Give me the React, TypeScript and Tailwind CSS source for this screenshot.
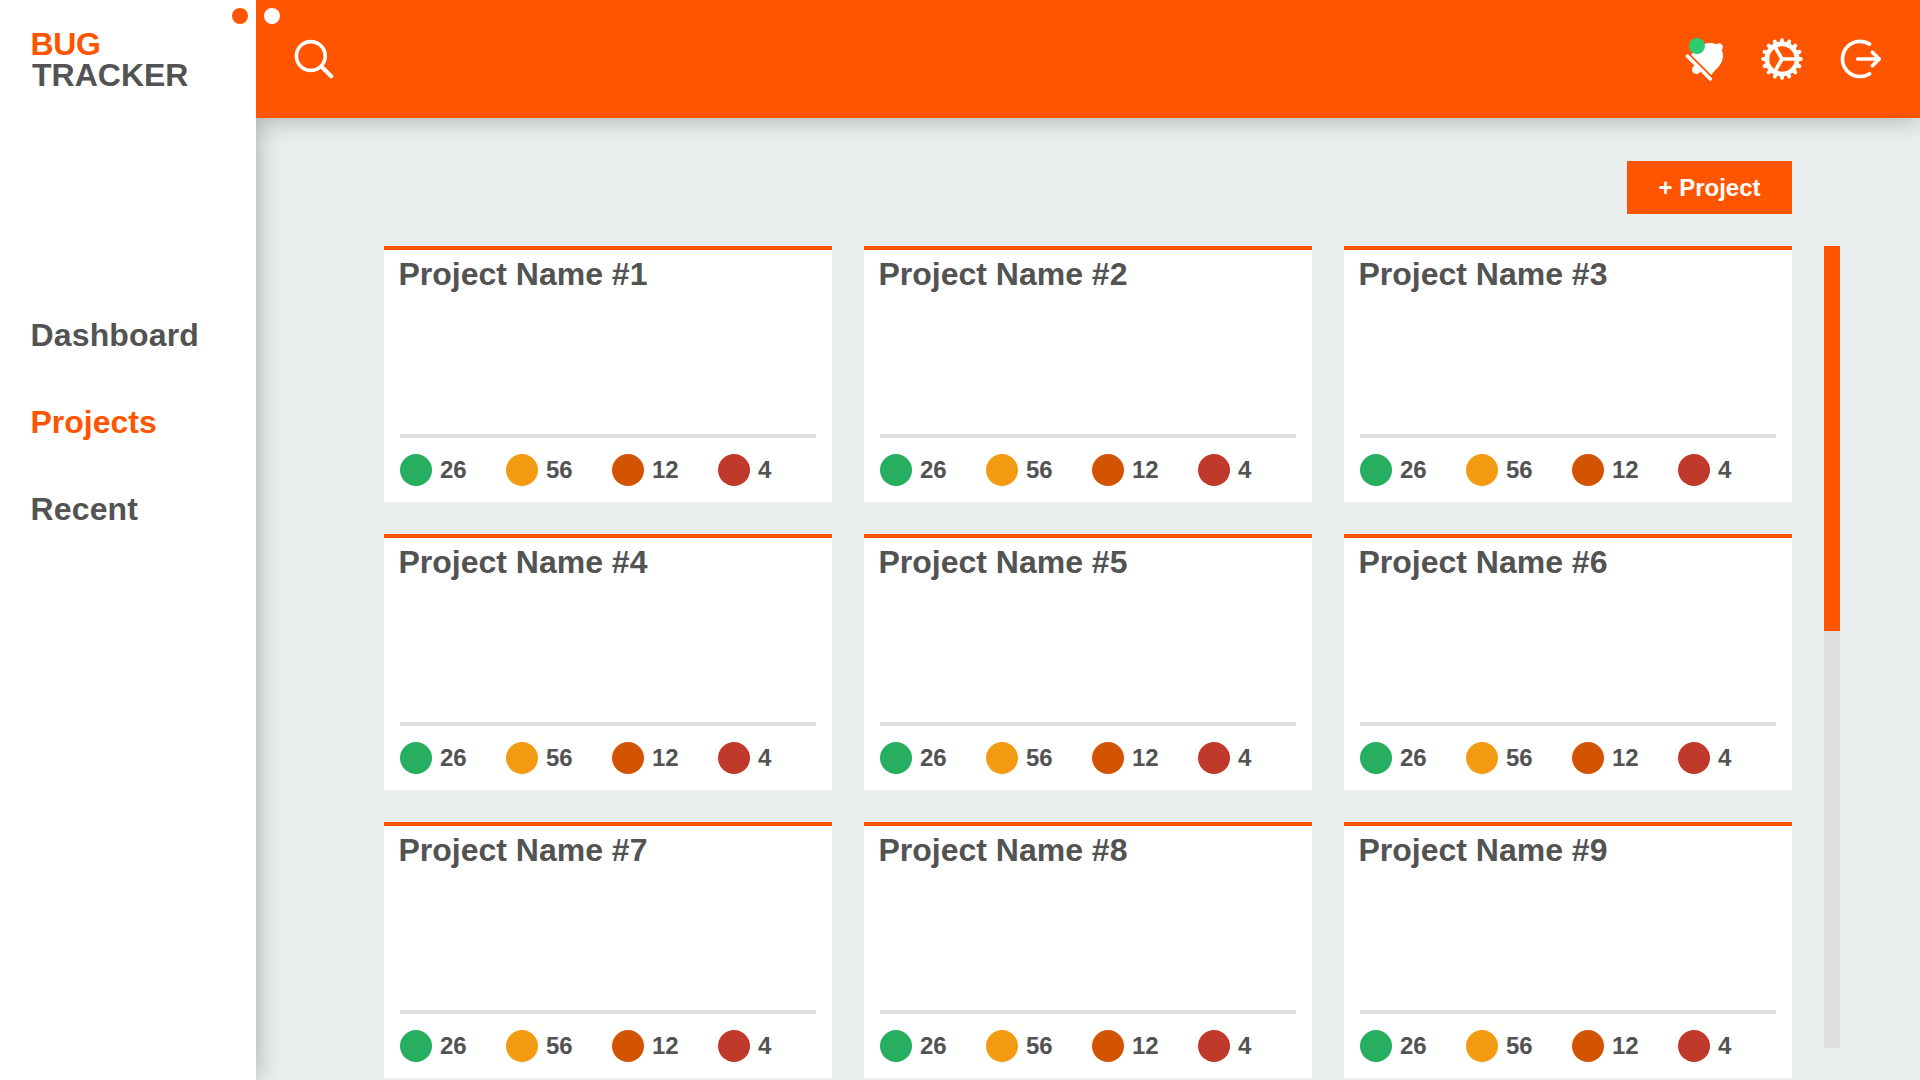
const TEETH = Array.from({ length: 16 }, (_, i) => i * 22.5);

const STATS = [
  { color: 'bg-[#27ae60]', count: 26 },
  { color: 'bg-[#f39c12]', count: 56 },
  { color: 'bg-[#d35400]', count: 12 },
  { color: 'bg-[#c0392b]', count: 4 },
];

function SearchIcon() {
  return (
    <svg width="40" height="40" viewBox="0 0 40 40" fill="none" stroke="white" strokeLinecap="round">
      <circle cx="16.8" cy="17" r="14.4" strokeWidth="3.6" />
      <path d="M27.6 27.8L37.3 37.3" strokeWidth="4" />
    </svg>
  );
}

function BellOffIcon() {
  return (
    <svg width="40" height="48" viewBox="75 48 120 144">
      <path
        d="M93 104L154 165C164 148 189 136 189 107C189 100 187 94 185 89A9.5 9.5 0 1 0 171 73C165 71 158 69 150 69C128 69 116 83 93 104Z"
        fill="white"
      />
      <circle cx="109" cy="149" r="13" fill="white" />
      <path d="M82 108L151 177" stroke="white" strokeWidth="10.5" strokeLinecap="round" />
      <circle cx="111" cy="78" r="24" fill="#2ecc71" />
    </svg>
  );
}

function GearIcon() {
  return (
    <svg width="42" height="42" viewBox="-21 -21 42 42" fill="none" stroke="white" strokeLinecap="round">
      <circle r="15.1" strokeWidth="4.8" />
      {TEETH.map((a) => (
        <path key={a} d="M16 0H18.8" strokeWidth="4" transform={`rotate(${a})`} />
      ))}
      {[0, 120, 240].map((a) => (
        <path key={a} d="M0 0H14" strokeWidth="3.6" transform={`rotate(${a})`} />
      ))}
    </svg>
  );
}

function LogOutIcon() {
  return (
    <svg
      width="42"
      height="42"
      viewBox="0 0 42 42"
      fill="none"
      stroke="white"
      strokeWidth="3.7"
      strokeLinecap="round"
      strokeLinejoin="round"
    >
      <path d="M29.6 6.1A17.6 17.6 0 1 0 29.6 35.7" />
      <path d="M17.8 21H39M32.4 14.3L39.2 21L32.4 27.7" />
    </svg>
  );
}

function ProjectCard({ n }: { n: number }) {
  return (
    <article className="flex h-64 flex-col border-t-4 border-[#ff5500] bg-white px-4 pb-4">
      <h2 className="-ml-[1.6px] mt-1 flex-1 text-[32px] leading-10">Project Name #{n}</h2>
      <div className="h-1 bg-[#dfdfdf]" />
      <div className="mt-4 flex">
        {STATS.map((s) => (
          <div key={s.count} className="flex w-[106px] shrink-0 items-center gap-2">
            <span className={`size-8 rounded-full ${s.color}`} />
            <span className="text-2xl leading-8">{s.count}</span>
          </div>
        ))}
      </div>
    </article>
  );
}

export default function App() {
  return (
    <div className="flex h-[1080px] w-[1920px] overflow-hidden bg-[#ebeff0] font-['Liberation_Sans',Arial,sans-serif] font-bold text-[#535353]">
      <aside className="relative z-10 w-64 shrink-0 bg-white shadow-[0_0_26px_rgba(0,0,0,0.3)]">
        <div className="flex justify-end pt-2 pr-2">
          <span className="size-4 rounded-full bg-[#ff5500]" />
        </div>
        <div className="pl-[30.5px] text-[32px] leading-[31px]">
          <div className="mt-[5px] tracking-[-0.3px] text-[#ff5500]">BUG</div>
          <div className="pl-[1.5px]">TRACKER</div>
        </div>
        <nav className="mt-[224px] flex flex-col gap-[47px] pl-[30.5px] text-[32px] leading-10">
          <a className="tracking-[0.15px]">Dashboard</a>
          <a className="text-[#ff5500]">Projects</a>
          <a className="tracking-[0.15px]">Recent</a>
        </nav>
      </aside>

      <div className="flex min-w-0 flex-1 flex-col">
        <header className="relative z-20 flex h-[118px] shrink-0 items-start bg-[#ff5500] shadow-[0_0_26px_rgba(0,0,0,0.3)] [clip-path:inset(0_0_-40px_0)]">
          <span className="mt-2 ml-2 size-4 rounded-full bg-white" />
          <div className="mt-[39px] ml-[14px]">
            <SearchIcon />
          </div>
          <div className="ml-auto flex items-start pr-[38px]">
            <div className="mt-9 mr-[36px]">
              <BellOffIcon />
            </div>
            <div className="mt-[38px] mr-[37px]">
              <GearIcon />
            </div>
            <div className="mt-[38px]">
              <LogOutIcon />
            </div>
          </div>
        </header>

        <main className="flex flex-1 flex-col pl-32">
          <div className="mt-[43px] flex w-[1408px] justify-end">
            <button className="h-[53px] w-[165px] bg-[#ff5500] text-2xl text-white">+ Project</button>
          </div>
          <div className="mt-8 flex gap-8">
            <div className="grid w-[1408px] shrink-0 grid-cols-3 gap-8">
              {[1, 2, 3, 4, 5, 6, 7, 8, 9].map((n) => (
                <ProjectCard key={n} n={n} />
              ))}
            </div>
            <div className="h-[802px] w-4 bg-[#dfdfdf]">
              <div className="h-[385px] bg-[#ff5500]" />
            </div>
          </div>
        </main>
      </div>
    </div>
  );
}
